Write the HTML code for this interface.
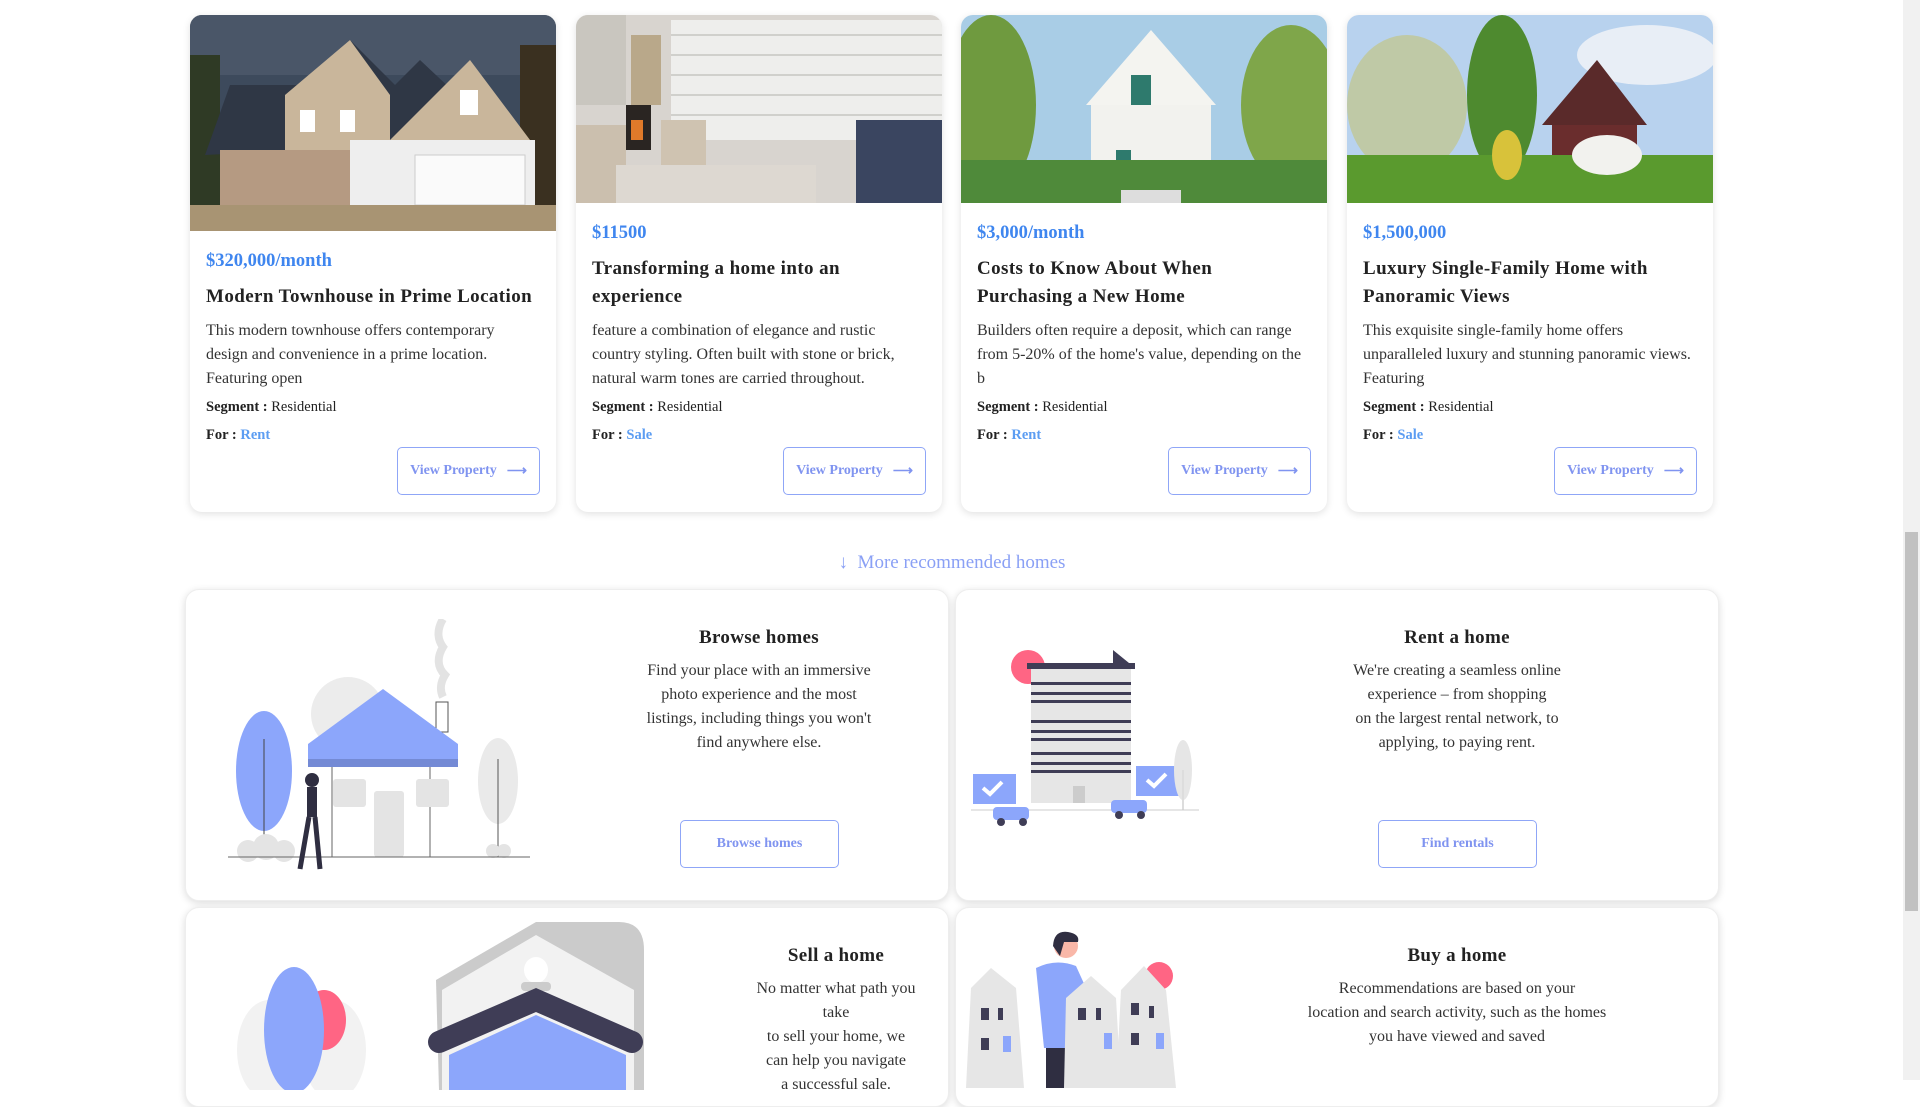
<!DOCTYPE html>
<html><head><meta charset="utf-8"><style>
*{box-sizing:border-box;margin:0;padding:0}
body{width:1920px;height:1080px;overflow:hidden;background:#fff;font-family:"Liberation Serif",serif;color:#222;position:relative}
.card{position:absolute;top:15px;width:366px;height:497px;background:#fff;border-radius:12px;box-shadow:0 2px 8px rgba(0,0,0,.12);overflow:hidden}
.card svg.ph{position:absolute;left:0;top:0;width:366px}
.a{position:absolute;left:16px;right:8px;white-space:nowrap}
.price{font-weight:bold;font-size:18.5px;color:#3f86ef;line-height:22px}
.title{font-weight:bold;font-size:19px;letter-spacing:.4px;line-height:28px;color:#222}
.body{font-size:16px;line-height:24px;color:#333}
.seg{font-size:14.5px;line-height:20px;color:#222}
.seg b{font-weight:bold}
.blue{color:#5c9df2;font-weight:bold}
.btn{position:absolute;left:207px;top:432px;width:143px;height:48px;border:1.5px solid #8fa6f7;border-radius:5px;color:#8094f0;font-weight:bold;font-size:14px;display:flex;align-items:center;justify-content:center;gap:10px}
.more{position:absolute;left:0;width:1904px;top:552px;text-align:center;font-size:19px;color:#8aa0f5}
.fc{position:absolute;background:#fff;border-radius:14px;box-shadow:0 2px 8px rgba(0,0,0,.14);border:1px solid #eee;overflow:hidden}
.ft{position:absolute;text-align:center;transform:translateX(-50%);white-space:nowrap}
.ft h3{font-size:19px;font-weight:bold;line-height:24px;letter-spacing:.3px;margin-bottom:9px;color:#222}
.ft p{font-size:16px;line-height:24px;color:#333}
.fb{position:absolute;width:159px;height:48px;border:1.5px solid #8fa6f7;border-radius:5px;color:#8094f0;font-weight:bold;font-size:14px;display:flex;align-items:center;justify-content:center}
.sb{position:absolute;left:1903px;top:0;width:17px;height:1080px;background:#f1f1f1}
.th{position:absolute;left:1905px;top:532px;width:13px;height:379px;background:#c1c1c1}
</style></head><body>

<div class="card" style="left:190px">
<svg class="ph" height="216" viewBox="0 0 366 216">
<rect width="366" height="216" fill="#3d4a5c"/><rect x="0" y="0" width="366" height="60" fill="#4a5668"/>
<rect x="0" y="40" width="30" height="150" fill="#2f3a25"/><rect x="330" y="30" width="36" height="160" fill="#3a3020"/>
<polygon points="15,140 40,70 120,70 160,25 205,70 230,45 315,125" fill="#2f3745"/>
<rect x="30" y="135" width="140" height="55" fill="#b59a82"/>
<polygon points="95,135 95,80 160,25 200,80 200,135" fill="#c9b69b"/>
<polygon points="200,125 280,45 340,125" fill="#c9b69b"/>
<rect x="160" y="125" width="185" height="65" fill="#eee"/>
<rect x="225" y="140" width="110" height="50" fill="#fafafa" stroke="#ccc"/>
<rect x="110" y="95" width="15" height="22" fill="#fff"/><rect x="150" y="95" width="15" height="22" fill="#fff"/><rect x="270" y="75" width="18" height="25" fill="#fff"/>
<rect x="0" y="190" width="366" height="26" fill="#a89473"/>
</svg>
<div class="a price" style="top:235px">$320,000/month</div>
<div class="a title" style="top:268px">Modern Townhouse in Prime Location</div>
<div class="a body" style="top:304px">This modern townhouse offers contemporary<br>design and convenience in a prime location.<br>Featuring open</div>
<div class="a seg" style="top:382px"><b>Segment :</b> Residential</div>
<div class="a seg" style="top:410px"><b>For :</b> <span class="blue">Rent</span></div>
<div class="btn">View Property <span>⟶</span></div>
</div>

<div class="card" style="left:576px">
<svg class="ph" height="188" viewBox="0 0 366 188">
<rect width="366" height="188" fill="#d8d4cf"/><rect x="0" y="0" width="50" height="90" fill="#c9c6bf"/>
<rect x="55" y="20" width="30" height="70" fill="#b9a88a"/><rect x="95" y="5" width="271" height="120" fill="#eeeeec"/>
<g stroke="#d0d0cc" stroke-width="2"><line x1="95" y1="20" x2="366" y2="20"/><line x1="95" y1="40" x2="366" y2="40"/><line x1="95" y1="60" x2="366" y2="60"/><line x1="95" y1="80" x2="366" y2="80"/><line x1="95" y1="100" x2="366" y2="100"/></g>
<rect x="50" y="90" width="25" height="45" fill="#2a2522"/><rect x="55" y="105" width="12" height="20" fill="#e07a2a"/>
<rect x="0" y="110" width="50" height="78" fill="#cbbfae"/><rect x="85" y="105" width="45" height="70" fill="#cfc3b1"/>
<rect x="280" y="105" width="86" height="83" fill="#3a4560"/><rect x="40" y="150" width="200" height="38" fill="#ddd8d1"/>
</svg>
<div class="a price" style="top:207px">$11500</div>
<div class="a title" style="top:240px">Transforming a home into an<br>experience</div>
<div class="a body" style="top:304px">feature a combination of elegance and rustic<br>country styling. Often built with stone or brick,<br>natural warm tones are carried throughout.</div>
<div class="a seg" style="top:382px"><b>Segment :</b> Residential</div>
<div class="a seg" style="top:410px"><b>For :</b> <span class="blue">Sale</span></div>
<div class="btn">View Property <span>⟶</span></div>
</div>

<div class="card" style="left:961px">
<svg class="ph" height="188" viewBox="0 0 366 188">
<rect width="366" height="188" fill="#a9cde6"/>
<ellipse cx="30" cy="90" rx="45" ry="90" fill="#6f9a3f"/><ellipse cx="330" cy="90" rx="50" ry="80" fill="#7fa64a"/>
<polygon points="125,90 190,15 255,90" fill="#f4f4f0"/><rect x="130" y="90" width="120" height="90" fill="#f2f2ee"/>
<rect x="170" y="60" width="20" height="30" fill="#2e7a6d"/><rect x="155" y="135" width="15" height="35" fill="#2e7a6d"/>
<rect x="0" y="145" width="366" height="43" fill="#4f8a3a"/><rect x="160" y="175" width="60" height="13" fill="#ddd"/>
</svg>
<div class="a price" style="top:207px">$3,000/month</div>
<div class="a title" style="top:240px">Costs to Know About When<br>Purchasing a New Home</div>
<div class="a body" style="top:304px">Builders often require a deposit, which can range<br>from 5-20% of the home's value, depending on the<br>b</div>
<div class="a seg" style="top:382px"><b>Segment :</b> Residential</div>
<div class="a seg" style="top:410px"><b>For :</b> <span class="blue">Rent</span></div>
<div class="btn">View Property <span>⟶</span></div>
</div>

<div class="card" style="left:1347px">
<svg class="ph" height="188" viewBox="0 0 366 188">
<rect width="366" height="188" fill="#b8d2ee"/><ellipse cx="300" cy="40" rx="70" ry="30" fill="#e8eef6"/>
<ellipse cx="60" cy="90" rx="60" ry="70" fill="#bfc9a6"/><ellipse cx="155" cy="80" rx="35" ry="80" fill="#4e8a2f"/>
<polygon points="195,110 250,45 300,110" fill="#5a2a2a"/><rect x="205" y="110" width="85" height="40" fill="#6a2d2d"/>
<rect x="0" y="140" width="366" height="48" fill="#5a9a2e"/><ellipse cx="260" cy="140" rx="35" ry="20" fill="#f2f2ee"/>
<ellipse cx="160" cy="140" rx="15" ry="25" fill="#d8c23a"/>
</svg>
<div class="a price" style="top:207px">$1,500,000</div>
<div class="a title" style="top:240px">Luxury Single-Family Home with<br>Panoramic Views</div>
<div class="a body" style="top:304px">This exquisite single-family home offers<br>unparalleled luxury and stunning panoramic views.<br>Featuring</div>
<div class="a seg" style="top:382px"><b>Segment :</b> Residential</div>
<div class="a seg" style="top:410px"><b>For :</b> <span class="blue">Sale</span></div>
<div class="btn">View Property <span>⟶</span></div>
</div>

<div class="more">↓&nbsp; More recommended homes</div>

<div class="fc" style="left:185px;top:589px;width:764px;height:312px">
<svg style="position:absolute;left:42px;top:29px" width="302" height="254" viewBox="0 0 302 254">
<path d="M215 0c-6 10 -6 20 0 28c-6 10 -6 20 2 28c-5 8 -5 16 -2 22" stroke="#e3e3e3" stroke-width="8" fill="none"/>
<circle cx="120" cy="95" r="37" fill="#ececec"/>
<rect x="208" y="83" width="12" height="30" fill="#fff" stroke="#555"/>
<rect x="104" y="138" width="98" height="100" fill="#fff" stroke="#666"/>
<polygon points="80,125 155,70 230,125 230,148 80,148" fill="#8ca6fb"/><rect x="80" y="140" width="150" height="8" fill="#748ad5"/>
<rect x="105" y="160" width="33" height="28" rx="3" fill="#e4e4e4"/><rect x="188" y="160" width="33" height="28" rx="3" fill="#e4e4e4"/><rect x="146" y="172" width="30" height="66" rx="3" fill="#e4e4e4"/>
<ellipse cx="36" cy="152" rx="28" ry="60" fill="#8ca6fb"/><line x1="36" y1="120" x2="36" y2="238" stroke="#444"/>
<ellipse cx="270" cy="162" rx="20" ry="43" fill="#eaeaea"/><line x1="270" y1="140" x2="270" y2="238" stroke="#555"/>
<circle cx="20" cy="232" r="11" fill="#e4e4e4"/><circle cx="38" cy="228" r="13" fill="#e4e4e4"/><circle cx="56" cy="232" r="11" fill="#e4e4e4"/>
<circle cx="265" cy="232" r="7" fill="#e4e4e4"/><circle cx="276" cy="232" r="7" fill="#e4e4e4"/>
<line x1="0" y1="238" x2="302" y2="238" stroke="#666"/>
<circle cx="84" cy="161" r="7" fill="#2f2e41"/><rect x="79" y="168" width="10" height="30" fill="#2f2e41"/><path d="M81 198 L72 250 M87 198 L92 250" stroke="#2f2e41" stroke-width="5"/>
</svg>
<div class="ft" style="left:573px;top:36px"><h3>Browse homes</h3><p>Find your place with an immersive<br>photo experience and the most<br>listings, including things you won't<br>find anywhere else.</p></div>
<div class="fb" style="left:494px;top:230px">Browse homes</div>
</div>

<div class="fc" style="left:955px;top:589px;width:764px;height:312px">
<svg style="position:absolute;left:15px;top:60px" width="228" height="190" viewBox="0 0 228 190">
<circle cx="57" cy="17" r="17" fill="#ff6584"/>
<rect x="60" y="18" width="100" height="135" fill="#e6e6e6"/><rect x="56" y="13" width="108" height="6" fill="#3f3d56"/><polygon points="142,13 142,0 158,13" fill="#3f3d56"/>
<g fill="#3f3d56"><rect x="60" y="32" width="100" height="3"/><rect x="60" y="42" width="100" height="3"/><rect x="60" y="50" width="100" height="3"/><rect x="60" y="70" width="100" height="3"/><rect x="60" y="80" width="100" height="3"/><rect x="60" y="88" width="100" height="3"/><rect x="60" y="102" width="100" height="3"/><rect x="60" y="112" width="100" height="3"/><rect x="60" y="120" width="100" height="3"/></g>
<rect x="102" y="136" width="12" height="17" fill="#ccc"/>
<rect x="2" y="124" width="43" height="30" fill="#8ca6fb"/><path d="M12 138 l7 6 l12 -12" stroke="#fff" stroke-width="4" fill="none"/>
<rect x="165" y="116" width="43" height="30" fill="#8ca6fb"/><path d="M176 130 l7 6 l12 -12" stroke="#fff" stroke-width="4" fill="none"/>
<ellipse cx="212" cy="120" rx="9" ry="30" fill="#e6e6e6"/><line x1="212" y1="120" x2="212" y2="160" stroke="#ddd" stroke-width="2"/>
<line x1="0" y1="160" x2="228" y2="160" stroke="#ccc"/>
<rect x="22" y="157" width="36" height="13" rx="4" fill="#8ca6fb"/><circle cx="30" cy="172" r="4" fill="#3f3d56"/><circle cx="52" cy="172" r="4" fill="#3f3d56"/>
<rect x="140" y="150" width="36" height="13" rx="4" fill="#8ca6fb"/><circle cx="148" cy="165" r="4" fill="#3f3d56"/><circle cx="170" cy="165" r="4" fill="#3f3d56"/>
</svg>
<div class="ft" style="left:501px;top:36px"><h3>Rent a home</h3><p>We're creating a seamless online<br>experience – from shopping<br>on the largest rental network, to<br>applying, to paying rent.</p></div>
<div class="fb" style="left:422px;top:230px">Find rentals</div>
</div>

<div class="fc" style="left:185px;top:907px;width:764px;height:200px">
<svg style="position:absolute;left:38px;top:12px" width="480" height="170" viewBox="0 0 480 170">
<ellipse cx="45" cy="130" rx="32" ry="50" fill="#f2f2f2"/><ellipse cx="110" cy="130" rx="32" ry="50" fill="#f2f2f2"/>
<ellipse cx="100" cy="100" rx="22" ry="30" fill="#ff6584"/><ellipse cx="70" cy="110" rx="30" ry="63" fill="#8ca6fb"/>
<path d="M212 60 L312 2 L395 2 Q420 2 420 30 L420 170 L215 170 Z" fill="#cbcbcb"/>
<path d="M218 70 L312 15 L410 70 L410 170 L218 170Z" fill="#f2f2f2"/>
<ellipse cx="312" cy="50" rx="12" ry="13" fill="#fff"/><rect x="297" y="62" width="30" height="9" rx="4" fill="#ccc"/>
<path d="M215 122 L312 80 L408 122" stroke="#3f3d56" stroke-width="22" fill="none" stroke-linecap="round"/>
<path d="M225 135 L312 95 L402 135 L402 170 L225 170Z" fill="#8ca6fb"/>
</svg>
<div class="ft" style="left:650px;top:36px"><h3>Sell a home</h3><p>No matter what path you<br>take<br>to sell your home, we<br>can help you navigate<br>a successful sale.</p></div>
</div>

<div class="fc" style="left:955px;top:907px;width:764px;height:200px">
<svg style="position:absolute;left:10px;top:20px" width="220" height="160" viewBox="0 0 220 160">
<circle cx="100" cy="18" r="12" fill="#f9b7a8"/><path d="M87 18 Q88 2 102 4 Q114 6 112 14 L98 14 L94 28Z" fill="#2f2e41"/>
<path d="M70 40 Q90 30 110 38 L120 60 L110 120 L78 120Z" fill="#8ca6fb"/><rect x="80" y="120" width="25" height="40" fill="#2f2e41"/>
<path d="M5 60 L25 40 L50 60 L58 160 L0 160Z" fill="#e6e6e6"/>
<path d="M100 70 L125 48 L150 70 L155 160 L98 160Z" fill="#e6e6e6"/>
<circle cx="193" cy="48" r="14" fill="#ff6584"/>
<path d="M155 62 L178 38 L200 62 L210 160 L150 160Z" fill="#e6e6e6"/>
<g fill="#3f3d56"><rect x="15" y="80" width="8" height="12"/><rect x="32" y="80" width="5" height="12"/><rect x="15" y="110" width="8" height="12"/><rect x="112" y="80" width="8" height="12"/><rect x="130" y="80" width="5" height="12"/><rect x="165" y="75" width="8" height="12"/><rect x="183" y="78" width="5" height="12"/><rect x="165" y="105" width="8" height="12"/></g>
<g fill="#8ca6fb"><rect x="37" y="108" width="8" height="16"/><rect x="138" y="105" width="8" height="16"/><rect x="190" y="105" width="8" height="16"/></g>
</svg>
<div class="ft" style="left:501px;top:36px"><h3>Buy a home</h3><p>Recommendations are based on your<br>location and search activity, such as the homes<br>you have viewed and saved</p></div>
</div>

<div class="sb"></div><div class="th"></div>
</body></html>
